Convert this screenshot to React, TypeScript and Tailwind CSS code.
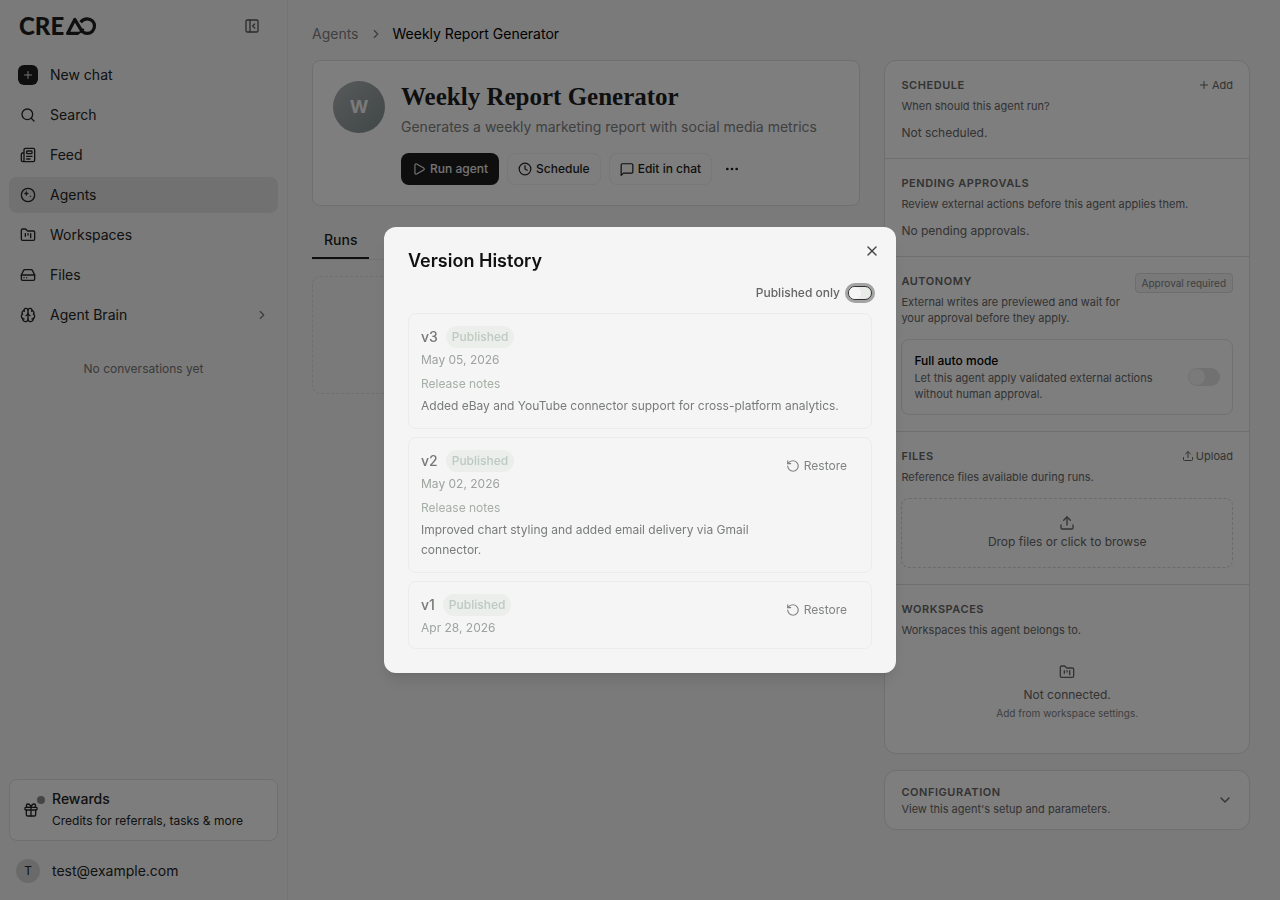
import { useState } from 'react';
import type { ReactNode } from 'react';
import {
  Brain,
  ChevronDown,
  ChevronRight,
  Clock,
  Ellipsis,
  FolderKanban,
  Gift,
  HardDrive,
  Newspaper,
  PanelLeftClose,
  Play,
  Plus,
  RotateCcw,
  Search,
  Upload,
  X,
} from 'lucide-react';

const versions = [
  {
    name: 'v3',
    date: 'May 05, 2026',
    notes: 'Added eBay and YouTube connector support for cross-platform analytics.',
    current: true,
  },
  {
    name: 'v2',
    date: 'May 02, 2026',
    notes: 'Improved chart styling and added email delivery via Gmail connector.',
    current: false,
  },
  { name: 'v1', date: 'Apr 28, 2026', notes: '', current: false },
];

function Logo() {
  return (
    <a href="#" aria-label="CREAO" className="flex items-center gap-px text-[#1c1e1c]">
      <span className="font-['Lato',sans-serif] text-2xl leading-6 font-black">CRE</span>
      <svg width="32" height="20" viewBox="0 0 32 20" fill="none" stroke="currentColor" strokeWidth="3.2" strokeLinejoin="round">
        <path d="M13.5 17.4H2.6L9.8 3.4L15.8 13.4C17.2 15.9 19.4 17.4 22.2 17.4A7.3 7.3 0 0 0 22.2 2.8C19.4 2.8 17.2 4 15.6 6.2" />
        <path d="M13 17.4C15.6 16.6 17.4 15 18.6 12.8" strokeWidth="2.2" />
      </svg>
    </a>
  );
}

function AgentIcon() {
  return (
    <svg width="16" height="16" viewBox="0 0 24 24" fill="none" stroke="currentColor" strokeWidth="2" strokeLinecap="round" strokeLinejoin="round">
      <circle cx="12" cy="12" r="10" />
      <path d="M9.5 6c.4 2.4 1.3 3.3 3.7 3.7-2.4.4-3.3 1.3-3.7 3.7-.4-2.4-1.3-3.3-3.7-3.7 2.4-.4 3.3-1.3 3.7-3.7z" fill="currentColor" strokeWidth="0.5" />
      <circle cx="15.5" cy="14" r="0.7" fill="currentColor" strokeWidth="0.5" />
    </svg>
  );
}

function ChatIcon() {
  return (
    <svg width="14" height="14" viewBox="0 0 24 24" fill="none" stroke="currentColor" strokeWidth="2" strokeLinecap="round" strokeLinejoin="round">
      <path d="M22 17a2 2 0 0 1-2 2H6l-4 4V5a2 2 0 0 1 2-2h16a2 2 0 0 1 2 2z" />
    </svg>
  );
}

const navItems = [
  { label: 'Search', icon: <Search size={16} /> },
  { label: 'Feed', icon: <Newspaper size={16} /> },
  { label: 'Agents', icon: <AgentIcon />, active: true },
  { label: 'Workspaces', icon: <FolderKanban size={16} /> },
  { label: 'Files', icon: <HardDrive size={16} /> },
  { label: 'Agent Brain', icon: <Brain size={16} />, more: true },
];

function Sidebar() {
  return (
    <aside className="sticky top-0 flex h-screen w-72 shrink-0 flex-col border-r border-[#e6e6e6] px-[9px]">
      <div className="flex h-[52px] items-center justify-between pr-[18px] pl-[10px]">
        <Logo />
        <button type="button" aria-label="Collapse sidebar" className="text-[#555]">
          <PanelLeftClose size={16} />
        </button>
      </div>

      <nav className="mt-[5px] flex flex-col gap-1 text-sm text-[#222422]">
        <a href="#" className="flex h-9 items-center gap-3 rounded-lg px-[9px]">
          <span className="flex size-5 items-center justify-center rounded-md bg-[#1c1c1c] text-[#e8e8e8]">
            <Plus size={12} />
          </span>
          New chat
        </a>
        {navItems.map((item) => (
          <a
            key={item.label}
            href="#"
            className={`flex h-9 items-center gap-3 rounded-lg px-[9px] ${item.active ? 'bg-[#e2e2e2]' : ''}`}
          >
            <span className="flex size-5 items-center justify-center">{item.icon}</span>
            <span className="flex-1">{item.label}</span>
            {item.more && <ChevronRight size={14} className="text-[#777]" />}
          </a>
        ))}
      </nav>

      <p className="mt-7 text-center text-xs leading-4 text-[#747674]">No conversations yet</p>

      <div className="mt-auto">
        <a href="#" className="flex items-center gap-[11px] rounded-lg border border-[#dedede] bg-[#fbfbfb] px-[11px] py-[9px] text-[#222422]">
          <span className="relative flex size-5 items-center justify-center">
            <Gift size={16} />
            <span className="absolute -top-1 -right-1 size-2 rounded-full bg-[#8a8a8a]" />
          </span>
          <span>
            <span className="block text-sm font-medium">Rewards</span>
            <span className="mt-[2px] block text-xs leading-5">Credits for referrals, tasks &amp; more</span>
          </span>
        </a>
        <button type="button" className="flex h-[59px] w-full items-center gap-3 px-[7px] text-sm text-[#222422]">
          <span className="flex size-6 items-center justify-center rounded-full bg-[#d4d4d4] text-xs">T</span>
          test@example.com
        </button>
      </div>
    </aside>
  );
}

function Section({ title, desc, action, children }: { title: string; desc: string; action?: ReactNode; children: ReactNode }) {
  return (
    <section className="border-b border-[#dedede] p-4 last:border-b-0">
      <div className="flex items-start justify-between gap-3">
        <div>
          <h2 className="text-[11px] leading-4 font-semibold tracking-wider text-[#666] uppercase">{title}</h2>
          <p className="mt-[5px] text-[11px] leading-4 text-[#666]">{desc}</p>
        </div>
        {action}
      </div>
      {children}
    </section>
  );
}

function SidePanel() {
  const [fullAuto, setFullAuto] = useState(false);

  return (
    <div className="flex flex-col gap-4">
      <div className="rounded-xl border border-[#dedede] bg-[#fcfcfc]">
        <Section
          title="Schedule"
          desc="When should this agent run?"
          action={
            <button type="button" className="flex items-center gap-[2px] text-[11px] leading-4 text-[#666]">
              <Plus size={12} />
              Add
            </button>
          }
        >
          <p className="mt-[10px] text-xs leading-[18px] text-[#666]">Not scheduled.</p>
        </Section>

        <Section title="Pending approvals" desc="Review external actions before this agent applies them.">
          <p className="mt-[10px] text-xs leading-[18px] text-[#666]">No pending approvals.</p>
        </Section>

        <Section
          title="Autonomy"
          desc="External writes are previewed and wait for your approval before they apply."
          action={
            <span className="shrink-0 rounded border border-[#dadada] bg-[#f2f2f2] px-[6px] text-[10px] leading-[18px] text-[#808080]">
              Approval required
            </span>
          }
        >
          <div className="mt-[13px] flex items-center justify-between gap-6 rounded-lg border border-[#e2e2e2] p-3">
            <div>
              <label htmlFor="fullAuto" className="block text-xs leading-[18px] font-medium text-black">
                Full auto mode
              </label>
              <p className="text-[11px] leading-4 text-[#666]">
                Let this agent apply validated external actions without human approval.
              </p>
            </div>
            <input
              id="fullAuto"
              type="checkbox"
              role="switch"
              checked={fullAuto}
              onChange={(e) => setFullAuto(e.target.checked)}
              className="h-[18px] w-8 shrink-0 appearance-none rounded-full bg-[#e2e2e2] p-px before:block before:size-4 before:rounded-full before:bg-[#f5f5f5] checked:bg-[#444] checked:before:ml-[14px]"
            />
          </div>
        </Section>

        <Section
          title="Files"
          desc="Reference files available during runs."
          action={
            <button type="button" className="flex items-center gap-[2px] text-[11px] leading-4 text-[#666]">
              <Upload size={12} />
              Upload
            </button>
          }
        >
          <button
            type="button"
            className="mt-[13px] flex w-full flex-col items-center gap-[2px] rounded-lg border border-dashed border-[#d6d6d6] py-4 text-xs leading-[18px] text-[#666]"
          >
            <Upload size={16} />
            Drop files or click to browse
          </button>
        </Section>

        <Section title="Workspaces" desc="Workspaces this agent belongs to.">
          <div className="mt-[10px] flex flex-col items-center py-4 text-[#666]">
            <FolderKanban size={16} />
            <p className="mt-[5px] text-xs leading-5">Not connected.</p>
            <p className="text-[10px] leading-4 text-[#808080]">Add from workspace settings.</p>
          </div>
        </Section>
      </div>

      <button
        type="button"
        className="flex items-center justify-between rounded-xl border border-[#dedede] bg-[#fcfcfc] px-4 py-3 text-left text-[#666]"
      >
        <span>
          <span className="block text-[11px] leading-[18px] font-semibold tracking-wider uppercase">Configuration</span>
          <span className="block text-[11px] leading-4">View this agent's setup and parameters.</span>
        </span>
        <ChevronDown size={16} />
      </button>
    </div>
  );
}

function AgentHeader() {
  return (
    <div className="flex gap-4 rounded-lg border border-[#dedede] bg-[#fcfcfc] p-5">
      <div className="flex size-[52px] shrink-0 items-center justify-center rounded-full bg-linear-to-br from-[#b0b4b4] to-[#828e8e] text-lg font-bold text-[#f5f5f5]">
        W
      </div>
      <div>
        <h1 className="font-['Liberation_Serif',serif] text-[25px] leading-8 font-bold text-[#1c1e1c]">Weekly Report Generator</h1>
        <p className="mt-1 text-sm leading-5 text-[#808080]">Generates a weekly marketing report with social media metrics</p>
        <div className="mt-4 flex gap-2 text-xs font-medium text-[#1c1e1c]">
          <button type="button" className="flex h-8 items-center gap-1 rounded-lg bg-[#1c1c1c] px-[11px] text-[#e8e8e8]">
            <Play size={14} />
            Run agent
          </button>
          <button type="button" className="flex h-8 items-center gap-1 rounded-lg border border-[#f0f0f0] px-[10px]">
            <Clock size={14} />
            Schedule
          </button>
          <button type="button" className="flex h-8 items-center gap-1 rounded-lg border border-[#f0f0f0] px-[10px]">
            <ChatIcon />
            Edit in chat
          </button>
          <button type="button" aria-label="More actions" className="flex h-8 w-6 items-center justify-center">
            <Ellipsis size={16} />
          </button>
        </div>
      </div>
    </div>
  );
}

function VersionDialog() {
  const [publishedOnly, setPublishedOnly] = useState(false);

  return (
    <div className="fixed inset-0 flex items-center justify-center bg-black/50">
      <div
        role="dialog"
        aria-modal="true"
        aria-labelledby="versionTitle"
        className="relative w-full max-w-lg rounded-xl bg-[#f5f5f5] p-6 shadow-lg"
      >
        <h2 id="versionTitle" className="text-lg leading-5 font-semibold text-[#111]">
          Version History
        </h2>
        <button type="button" aria-label="Close" className="absolute top-4 right-4 text-[#444]">
          <X size={16} />
        </button>

        <div className="mt-[14px] flex h-4 items-center justify-end gap-2">
          <label htmlFor="publishedOnly" className="text-xs font-medium text-[#666]">
            Published only
          </label>
          <input
            id="publishedOnly"
            type="checkbox"
            role="switch"
            checked={publishedOnly}
            onChange={(e) => setPublishedOnly(e.target.checked)}
            className="h-[14px] w-6 appearance-none rounded-full border border-[#333] bg-[#e9ebe9] ring-3 ring-[#a3a3a3] before:block before:size-3 before:rounded-full before:bg-[#f5f5f5] checked:bg-[#777] checked:before:ml-[10px]"
          />
        </div>

        <ul className="mt-3 flex flex-col gap-2">
          {versions.map((version) => (
            <li key={version.name} className="flex items-start justify-between gap-3 rounded-lg border border-[#ebedeb] p-3">
              <div>
                <div className="flex h-[22px] items-center gap-2">
                  <span className="text-sm font-medium text-[#767876]">{version.name}</span>
                  <span className="rounded-full bg-[#ebeeeb] px-[6px] text-xs leading-[22px] font-medium text-[#bccabf]">Published</span>
                </div>
                <p className="mt-1 text-xs leading-4 text-[#9ea39f]">{version.date}</p>
                {version.notes && (
                  <>
                    <p className="mt-2 text-xs leading-4 text-[#a5afa7]">Release notes</p>
                    <p className="mt-1 text-xs leading-5 text-[#787c79]">{version.notes}</p>
                  </>
                )}
              </div>
              {!version.current && (
                <button type="button" className="flex h-8 shrink-0 items-center gap-1 px-3 text-xs text-[#808481]">
                  <RotateCcw size={14} />
                  Restore
                </button>
              )}
            </li>
          ))}
        </ul>
      </div>
    </div>
  );
}

export default function App() {
  return (
    <div className="flex min-h-screen bg-[#f5f5f5] font-['Inter',sans-serif]">
      <Sidebar />

      <main className="min-w-0 flex-1 pr-[30px] pb-6 pl-6">
        <nav aria-label="Breadcrumb" className="flex items-center gap-[10px] pt-6 pb-4 text-sm leading-5">
          <a href="#" className="text-[#808080]">Agents</a>
          <ChevronRight size={14} className="text-[#777]" />
          <span className="text-black">Weekly Report Generator</span>
        </nav>

        <div className="grid grid-cols-[3fr_2fr] items-start gap-6">
          <div>
            <AgentHeader />
            <div role="tablist" className="mt-4 flex border-b border-[#e6e6e6]">
              <button
                type="button"
                role="tab"
                aria-selected="true"
                className="h-[37px] border-b-2 border-[#1c1e1c] px-3 text-sm font-medium text-[#1c1e1c]"
              >
                Runs
              </button>
            </div>
            <div className="mt-4 h-[118px] rounded-lg border border-dashed border-[#dedede]" />
          </div>
          <SidePanel />
        </div>
      </main>

      <VersionDialog />
    </div>
  );
}
